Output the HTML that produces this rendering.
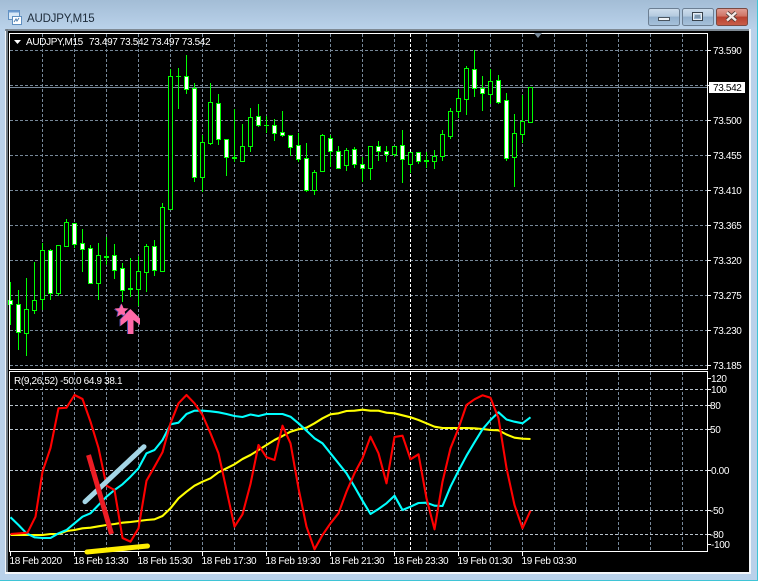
<!DOCTYPE html>
<html><head><meta charset="utf-8"><style>
html,body{margin:0;padding:0;width:760px;height:583px;overflow:hidden;background:#fff}
svg{display:block}
text{font-family:"Liberation Sans",sans-serif;font-size:10px;letter-spacing:-.35px;fill:#fff}
</style></head><body>
<svg width="760" height="583" viewBox="0 0 760 583" xmlns="http://www.w3.org/2000/svg">
<defs>
<linearGradient id="bg" x1="0" y1="0" x2="0" y2="1"><stop offset="0" stop-color="#a3bdd6"/><stop offset="1" stop-color="#bad2ea"/></linearGradient>
<linearGradient id="btn" x1="0" y1="0" x2="0" y2="1"><stop offset="0" stop-color="#cfdeed"/><stop offset=".45" stop-color="#b4cadf"/><stop offset=".5" stop-color="#93b0cd"/><stop offset="1" stop-color="#a8c3dc"/></linearGradient>
<linearGradient id="red" x1="0" y1="0" x2="0" y2="1"><stop offset="0" stop-color="#e0a096"/><stop offset=".45" stop-color="#cf7464"/><stop offset=".5" stop-color="#b8402e"/><stop offset="1" stop-color="#c95f4a"/></linearGradient>
</defs>
<rect x="0" y="0" width="758" height="581" fill="#b9d1ea"/>
<rect x="0" y="0" width="758" height="29" fill="url(#bg)"/>
<rect x="0" y="580" width="758" height="1" fill="#3fc4d6"/>
<rect x="757" y="0" width="1" height="581" fill="#3fc4d6"/>
<!-- window icon -->
<rect x="8.5" y="10.5" width="11" height="9" fill="#d7e8f7" stroke="#5f8fc0"/>
<rect x="8.5" y="10.5" width="11" height="2" fill="#6c9bd0"/>
<rect x="12.5" y="16.5" width="9" height="8" fill="#fff" stroke="#5f8fc0"/>
<path d="M14 22l2-3 1 2 2-3" fill="none" stroke="#4f7fb0" stroke-width="1"/>
<text x="27" y="22" style="font-size:11.5px;letter-spacing:-.2px;fill:#1d2b3a">AUDJPY,M15</text>
<!-- buttons -->
<rect x="648.5" y="8.5" width="31" height="17" rx="2" fill="url(#btn)" stroke="#6c7f93"/>
<rect x="658.5" y="17.5" width="11" height="3" fill="#eef2f6" stroke="#4a5560"/>
<rect x="682.5" y="8.5" width="31" height="17" rx="2" fill="url(#btn)" stroke="#6c7f93"/>
<rect x="692.5" y="12.5" width="10" height="8" fill="none" stroke="#38424c"/><rect x="693.5" y="13.5" width="8" height="6" fill="none" stroke="#e8eef4"/><rect x="695" y="15" width="5" height="3" fill="#7f97ad"/>
<rect x="716.5" y="8.5" width="31" height="17" rx="2" fill="url(#red)" stroke="#7a4a42"/>
<path d="M727 12.5l9 8M736 12.5l-9 8" stroke="#4a3a36" stroke-width="4"/>
<path d="M727 12.5l9 8M736 12.5l-9 8" stroke="#f4ece8" stroke-width="2.4"/>
<!-- frame -->
<rect x="5" y="29" width="746" height="545" fill="#f3f6f9"/>
<rect x="5" y="29" width="744" height="2" fill="#7f8a94"/>
<rect x="6" y="29" width="2" height="543" fill="#6f7a84"/>
<rect x="8" y="31" width="741" height="541" fill="#000"/>
<!-- grid -->
<g stroke="#778899" stroke-width="1" stroke-dasharray="3 2" fill="none" shape-rendering="crispEdges">
<path d="M42.5 34V369M74.5 34V369M106.5 34V369M138.5 34V369M170.5 34V369M202.5 34V369M234.5 34V369M266.5 34V369M298.5 34V369M330.5 34V369M362.5 34V369M394.5 34V369M426.5 34V369M458.5 34V369M490.5 34V369M522.5 34V369M554.5 34V369M586.5 34V369M618.5 34V369M650.5 34V369M682.5 34V369"/>
<path d="M42.5 372V551M74.5 372V551M106.5 372V551M138.5 372V551M170.5 372V551M202.5 372V551M234.5 372V551M266.5 372V551M298.5 372V551M330.5 372V551M362.5 372V551M394.5 372V551M426.5 372V551M458.5 372V551M490.5 372V551M522.5 372V551M554.5 372V551M586.5 372V551M618.5 372V551M650.5 372V551M682.5 372V551"/>
<path d="M10 50.5H707M10 85.5H707M10 120.5H707M10 155.5H707M10 190.5H707M10 225.5H707M10 260.5H707M10 295.5H707M10 330.5H707M10 365.5H707"/>
<path stroke="#b8c2cc" d="M10 389.5H707M10 405.5H707M10 429.5H707M10 470.5H707M10 510.5H707M10 534.5H707"/>
</g>
<g stroke="#fff" stroke-dasharray="3 2" shape-rendering="crispEdges"><path d="M410.5 34V369M410.5 372V551"/></g>
<path d="M10 87.5H707" stroke="#778899" shape-rendering="crispEdges"/>
<!-- candles -->
<path stroke="#00ff00" fill="none" shape-rendering="crispEdges" d="M10.5 282V325M18.5 290V350M26.5 278V356M34.5 262V314M42.5 243V310M50.5 249V300M58.5 245V296M66.5 219V247M74.5 223V248M82.5 229V272M90.5 245V283M98.5 243V300M106.5 237V265M114.5 244V279M122.5 263V302M130.5 258V297M138.5 256V306M146.5 244V292M154.5 240V276M162.5 203V272M170.5 69V210M178.5 68V109M186.5 55V94M194.5 83V182M202.5 135V192M210.5 83V145M218.5 94V145M226.5 139V176M234.5 109V162M242.5 124V161M250.5 108V152M258.5 104V127M266.5 116V133M274.5 119V141M282.5 111V137M290.5 135V156M298.5 133V162M306.5 143V192M314.5 170V195M322.5 134V171M330.5 135V167M338.5 146V168M346.5 148V171M354.5 147V168M362.5 157V182M370.5 146V180M378.5 141V161M386.5 146V162M394.5 146V157M402.5 130V183M410.5 152V173M418.5 152V164M426.5 152V168M434.5 150V169M442.5 130V161M450.5 108V139M458.5 89V118M466.5 66V115M474.5 50V97M482.5 76V111M490.5 69V104M498.5 75V104M506.5 93V161M514.5 114V187M522.5 95V143M530.5 87V122"/>
<g fill="#00ff00" shape-rendering="crispEdges"><rect x="104" y="256" width="5" height="2"/><rect x="128" y="288" width="5" height="2"/><rect x="176" y="76" width="5" height="1"/><rect x="232" y="157" width="5" height="2"/><rect x="264" y="125" width="5" height="1"/><rect x="424" y="160" width="5" height="2"/></g>
<g stroke="#00ff00" fill="#000" shape-rendering="crispEdges">
<rect x="24.5" y="309.5" width="4" height="24"/><rect x="32.5" y="300.5" width="4" height="10"/><rect x="40.5" y="250.5" width="4" height="49"/><rect x="56.5" y="245.5" width="4" height="48"/><rect x="64.5" y="222.5" width="4" height="24"/><rect x="96.5" y="255.5" width="4" height="28"/><rect x="136.5" y="271.5" width="4" height="18"/><rect x="144.5" y="246.5" width="4" height="26"/><rect x="160.5" y="207.5" width="4" height="64"/><rect x="168.5" y="76.5" width="4" height="133"/><rect x="200.5" y="142.5" width="4" height="35"/><rect x="208.5" y="102.5" width="4" height="41"/><rect x="240.5" y="146.5" width="4" height="15"/><rect x="248.5" y="117.5" width="4" height="29"/><rect x="312.5" y="172.5" width="4" height="18"/><rect x="320.5" y="135.5" width="4" height="36"/><rect x="344.5" y="150.5" width="4" height="15"/><rect x="368.5" y="146.5" width="4" height="22"/><rect x="392.5" y="146.5" width="4" height="8"/><rect x="408.5" y="152.5" width="4" height="12"/><rect x="432.5" y="156.5" width="4" height="5"/><rect x="440.5" y="134.5" width="4" height="22"/><rect x="448.5" y="111.5" width="4" height="25"/><rect x="456.5" y="98.5" width="4" height="13"/><rect x="464.5" y="68.5" width="4" height="31"/><rect x="488.5" y="81.5" width="4" height="13"/><rect x="512.5" y="133.5" width="4" height="24"/><rect x="520.5" y="121.5" width="4" height="13"/><rect x="528.5" y="87.5" width="4" height="35"/>
</g>
<g stroke="#00ff00" fill="#fff" shape-rendering="crispEdges">
<rect x="8.5" y="300.5" width="4" height="4"/><rect x="16.5" y="304.5" width="4" height="28"/><rect x="48.5" y="250.5" width="4" height="43"/><rect x="72.5" y="223.5" width="4" height="21"/><rect x="80.5" y="243.5" width="4" height="6"/><rect x="88.5" y="248.5" width="4" height="35"/><rect x="112.5" y="255.5" width="4" height="15"/><rect x="120.5" y="268.5" width="4" height="22"/><rect x="152.5" y="246.5" width="4" height="24"/><rect x="184.5" y="76.5" width="4" height="13"/><rect x="192.5" y="88.5" width="4" height="89"/><rect x="216.5" y="103.5" width="4" height="36"/><rect x="224.5" y="139.5" width="4" height="18"/><rect x="256.5" y="116.5" width="4" height="9"/><rect x="272.5" y="125.5" width="4" height="8"/><rect x="280.5" y="132.5" width="4" height="3"/><rect x="288.5" y="135.5" width="4" height="12"/><rect x="296.5" y="145.5" width="4" height="14"/><rect x="304.5" y="158.5" width="4" height="32"/><rect x="328.5" y="138.5" width="4" height="13"/><rect x="336.5" y="151.5" width="4" height="17"/><rect x="352.5" y="149.5" width="4" height="15"/><rect x="360.5" y="164.5" width="4" height="4"/><rect x="376.5" y="146.5" width="4" height="5"/><rect x="384.5" y="151.5" width="4" height="3"/><rect x="400.5" y="145.5" width="4" height="14"/><rect x="416.5" y="152.5" width="4" height="9"/><rect x="472.5" y="69.5" width="4" height="19"/><rect x="480.5" y="88.5" width="4" height="5"/><rect x="496.5" y="80.5" width="4" height="22"/><rect x="504.5" y="100.5" width="4" height="58"/>
</g>
<!-- star & arrow -->
<path d="M120.6 304l1.9 4.6 5 .4-3.8 3.2 1.2 4.9-4.3-2.6-4.3 2.6 1.2-4.9-3.8-3.2 5-.4z" fill="#4a4aa8"/>
<path d="M121.6 303.5l1.9 4.6 5 .4-3.8 3.2 1.2 4.9-4.3-2.6-4.3 2.6 1.2-4.9-3.8-3.2 5-.4z" fill="#ff6aa8"/>
<path d="M129.5 309.5L119.5 319.5V326.5L127 321V334H132V320z" fill="#4a4aa8"/>
<path d="M130.5 309L120.5 319.5V326L128 320V334H133.5V320L140 325V318.5z" fill="#ff6aa8"/>
<!-- frames -->
<g stroke="#fff" fill="none" shape-rendering="crispEdges">
<rect x="9.5" y="33.5" width="698" height="336"/>
<rect x="9.5" y="371.5" width="698" height="180"/>
<path d="M708 50.5h3M708 85.5h3M708 120.5h3M708 155.5h3M708 190.5h3M708 225.5h3M708 260.5h3M708 295.5h3M708 330.5h3M708 365.5h3M708 378.5h3M708 389.5h3M708 405.5h3M708 429.5h3M708 470.5h3M708 510.5h3M708 534.5h3M708 544.5h3"/>
<path d="M10.5 552v4M74.5 552v4M138.5 552v4M202.5 552v4M266.5 552v4M330.5 552v4M394.5 552v4M458.5 552v4M522.5 552v4"/>
</g>
<polygon points="534,33 542,33 538,38" fill="#778899"/>
<polygon points="14,40 21,40 17.5,44" fill="#fff"/>
<!-- indicator lines -->
<g fill="none" stroke-linejoin="round" stroke-width="2.1">
<polyline stroke="#ffff00" points="10.5,535 42.5,535 50.5,534 58.5,534 66.5,531 74.5,530 82.5,528.3 90.5,527.7 98.5,526.3 106.5,525 114.5,524 122.5,522.7 130.5,522 138.5,521 146.5,520 154.5,519.3 162.5,516 170.5,508.3 178.5,498.3 186.5,491.7 194.5,485.7 202.5,481.7 210.5,478.3 218.5,472.3 226.5,468.3 234.5,464.3 242.5,459 250.5,455 258.5,450 266.5,445 274.5,440 282.5,436 290.5,431.7 298.5,429.3 306.5,427.7 314.5,423.3 322.5,418.3 330.5,414.3 338.5,413.3 346.5,411 354.5,410.7 362.5,409.7 370.5,410.7 378.5,410.7 386.5,412.7 394.5,413.3 402.5,415.3 410.5,417.3 418.5,420 426.5,423.3 434.5,426.7 442.5,428 450.5,428 458.5,428 466.5,428 474.5,428.3 482.5,429 490.5,430 498.5,430.3 506.5,434.5 514.5,437.7 522.5,438.7 530.5,439"/>
<polyline stroke="#00ffff" points="10.5,517.3 18.5,525 26.5,533.3 34.5,537.3 42.5,538 50.5,538 58.5,533.3 66.5,530 74.5,523.3 82.5,516.7 90.5,513.3 98.5,505 106.5,496.7 114.5,490 122.5,484.3 130.5,476.7 138.5,468.3 146.5,453.3 154.5,450 162.5,440 170.5,424.3 178.5,422.7 186.5,414 194.5,410.7 202.5,410.7 210.5,411.3 218.5,412.3 226.5,414 234.5,416 242.5,417 250.5,414.5 258.5,416 266.5,414 274.5,414 282.5,414 290.5,416.7 298.5,423.3 306.5,430.7 314.5,438.3 322.5,443.3 330.5,453.3 338.5,463.3 346.5,473.3 354.5,486.7 362.5,500.7 370.5,514 378.5,509 386.5,503.3 394.5,495.7 402.5,510 410.5,506.7 418.5,503 426.5,502.7 434.5,505.7 442.5,506 450.5,486.7 458.5,470.7 466.5,455.7 474.5,442.3 482.5,429.3 490.5,420 498.5,412.3 506.5,419.5 514.5,421.7 522.5,423.3 530.5,417.3"/>
<polyline stroke="#ff0000" points="10.5,534 27.5,532.7 35.5,516.7 42.5,471.7 50.5,448 58.5,408.3 66.5,407.7 74.5,395 82.5,399 90.5,421.7 98.5,448 106.5,485.7 114.5,490 122.5,538 130.5,541.7 138.5,528.3 146.5,480.7 154.5,466.7 162.5,452.3 170.5,423.3 178.5,403.3 186.5,395 194.5,403.3 202.5,415 210.5,433.3 218.5,453.3 226.5,490 234.5,526.7 242.5,514.3 250.5,484 258.5,445 266.5,457.3 274.5,460 282.5,425.7 290.5,443.3 298.5,488.3 306.5,526.7 314.5,549.3 322.5,535 330.5,523.3 338.5,513.3 346.5,491.7 354.5,473.3 362.5,458.3 370.5,436.7 378.5,453.3 386.5,483.3 394.5,437 402.5,435.7 410.5,459.3 418.5,454.3 426.5,498.3 434.5,529.3 442.5,481.7 450.5,448.3 458.5,428.3 466.5,405 474.5,399.3 482.5,395.3 490.5,397.7 498.5,418.3 506.5,468 514.5,505 522.5,528.3 530.5,510.7"/>
</g>
<!-- drawn marks -->
<path d="M85 501.7L144 446.7" stroke="#a5d6e6" stroke-width="5" stroke-linecap="round"/>
<path d="M88.5 455L111.5 534" stroke="#ed1c24" stroke-width="5"/>
<path d="M87 552L147.5 546" stroke="#ffee00" stroke-width="5" stroke-linecap="round"/>
<!-- text -->
<text x="26" y="45">AUDJPY,M15</text>
<text x="89" y="45">73.497 73.542 73.497 73.542</text>
<text x="14" y="384">R(9,26,52) -50.0 64.9 38.1</text>
<g>
<text x="713" y="54">73.590</text>
<text x="713" y="124">73.500</text>
<text x="713" y="159">73.455</text>
<text x="713" y="194">73.410</text>
<text x="713" y="229">73.365</text>
<text x="713" y="264">73.320</text>
<text x="713" y="299">73.275</text>
<text x="713" y="334">73.230</text>
<text x="713" y="369">73.185</text>
<text x="711" y="382">120</text>
<text x="711" y="393">100</text>
<text x="710" y="409">80</text>
<text x="710" y="433">50</text>
<text x="711" y="474">0.00</text>
<text x="710" y="514">-50</text>
<text x="710" y="538">-80</text>
<text x="711" y="548">-100</text>
</g>
<rect x="709" y="82" width="36" height="11" fill="#fff"/>
<text x="713" y="91" style="fill:#000">73.542</text>
<g>
<text x="9.5" y="564">18 Feb 2020</text>
<text x="73.5" y="564">18 Feb 13:30</text>
<text x="137.5" y="564">18 Feb 15:30</text>
<text x="201.5" y="564">18 Feb 17:30</text>
<text x="265.5" y="564">18 Feb 19:30</text>
<text x="329.5" y="564">18 Feb 21:30</text>
<text x="393.5" y="564">18 Feb 23:30</text>
<text x="457.5" y="564">19 Feb 01:30</text>
<text x="521.5" y="564">19 Feb 03:30</text>
</g>
</svg>
</body></html>
